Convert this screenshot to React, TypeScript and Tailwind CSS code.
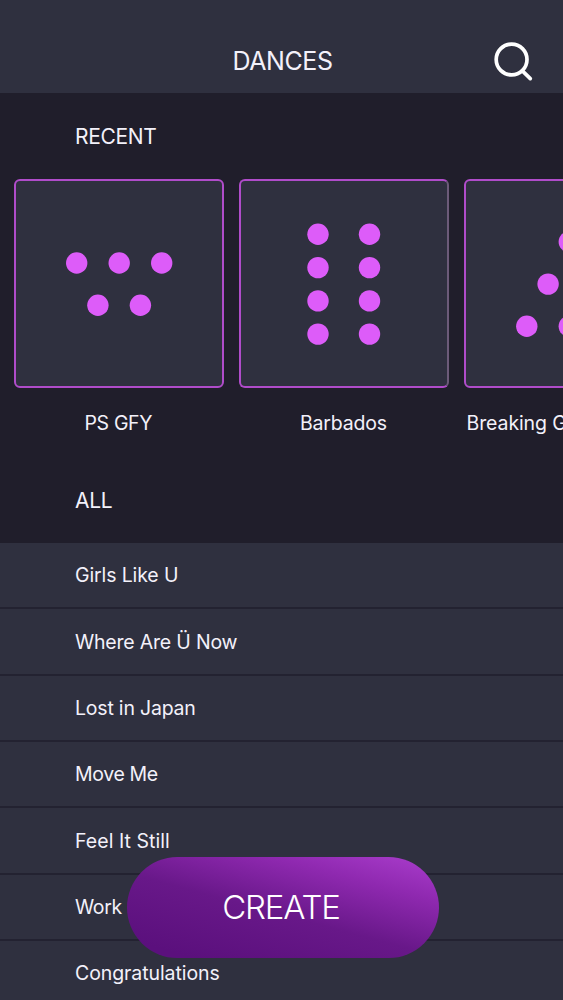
type Dot = [number, number];

type Dance = { name: string; dots: Dot[]; labelClass: string; cardClass?: string };

const recent: Dance[] = [
  {
    name: "PS GFY",
    labelClass: "pl-[70.5px] tracking-[-0.35px]",
    dots: [[62.7, 84], [105.2, 84], [147.7, 84], [83.9, 126.3], [126.4, 126.3]],
  },
  {
    name: "Barbados",
    labelClass: "pl-[61px] tracking-[-0.2px]",
    cardClass: "border-r-[#6c5b79]",
    dots: [
      [79, 55.3], [130.5, 55.3],
      [79, 88.6], [130.5, 88.6],
      [79, 121.9], [130.5, 121.9],
      [79, 155.1], [130.5, 155.1],
    ],
  },
  {
    name: "Breaking G",
    labelClass: "pl-[2.5px] tracking-[-0.1px]",
    dots: [[105.3, 62.8], [84.1, 105.1], [126.6, 105.1], [62.8, 147.3], [105.3, 147.3], [147.8, 147.3]],
  },
];

const songs = [
  { title: "Girls Like U", tracking: "tracking-[-0.12px]" },
  { title: "Where Are Ü Now", tracking: "tracking-[-0.2px]" },
  { title: "Lost in Japan", tracking: "tracking-[-0.2px]" },
  { title: "Move Me", tracking: "tracking-[-0.35px]" },
  { title: "Feel It Still", tracking: "tracking-[0.05px]" },
  { title: "Work", tracking: "tracking-[-0.35px]" },
  { title: "Congratulations", tracking: "tracking-[-0.08px]" },
];

function Header() {
  return (
    <header className="relative flex h-[93px] shrink-0 items-end justify-center bg-[#2f303f] pb-[17px]">
      <h1 className="pl-0.5 text-[25px] leading-[30px] tracking-[-0.4px]">DANCES</h1>
      <button aria-label="Search" className="absolute top-10 right-7">
        <svg className="block" width="42" height="42" viewBox="0 0 42 42" fill="none" stroke="white" strokeWidth="3.7" strokeLinecap="round">
          <circle cx="18.6" cy="19.5" r="15.4" />
          <path d="M29.9 31.4 37.3 38.6" />
        </svg>
      </button>
    </header>
  );
}

function DanceCard({ dance }: { dance: Dance }) {
  return (
    <div className="w-[210px] shrink-0">
      <div className={`h-[209px] overflow-hidden rounded-md border-2 border-[#b04cca] bg-[#2f303f] ${dance.cardClass ?? ""}`}>
        <svg className="-mt-0.5 -ml-0.5 block" width="210" height="209" viewBox="0 0 210 209" fill="#dd5cf9">
          {dance.dots.map(([x, y]) => (
            <circle key={`${x}-${y}`} cx={x} cy={y} r="10.7" />
          ))}
        </svg>
      </div>
      <p className={`mt-[23px] text-[19.5px] leading-6 whitespace-nowrap ${dance.labelClass}`}>{dance.name}</p>
    </div>
  );
}

export default function App() {
  return (
    <main className="relative flex h-[1000px] w-[563px] flex-col overflow-hidden bg-[#201e2b] font-['Inter',sans-serif] font-[380] text-[#f3f1fa]">
      <Header />
      <h2 className="mt-[31px] pl-[75px] text-[21px] leading-[26px] tracking-[-0.35px]">RECENT</h2>
      <section className="mt-[29px] flex shrink-0 gap-[15px] pl-3.5">
        {recent.map((dance) => (
          <DanceCard key={dance.name} dance={dance} />
        ))}
      </section>
      <h2 className="mt-[53px] pl-[75px] text-[21px] leading-[26px] tracking-[-0.3px]">ALL</h2>
      <ul className="mt-[29px] shrink-0">
        {songs.map(({ title, tracking }) => (
          <li key={title} className={`flex h-[66.35px] items-center border-b-2 border-[#232231] bg-[#2f303f] pl-[75px] text-[19.5px] leading-6 ${tracking}`}>
            {title}
          </li>
        ))}
      </ul>
      <button className="absolute top-[857px] left-[127px] flex h-[101px] w-[312px] items-center justify-center rounded-full bg-[linear-gradient(15deg,#5b107d_10%,#681889_46%,#8f29b0_76%,#a63ac8_96%)] pr-1 pb-0.5 text-[33px] leading-10 font-[360] tracking-[-1.2px] text-white">
        CREATE
      </button>
    </main>
  );
}
